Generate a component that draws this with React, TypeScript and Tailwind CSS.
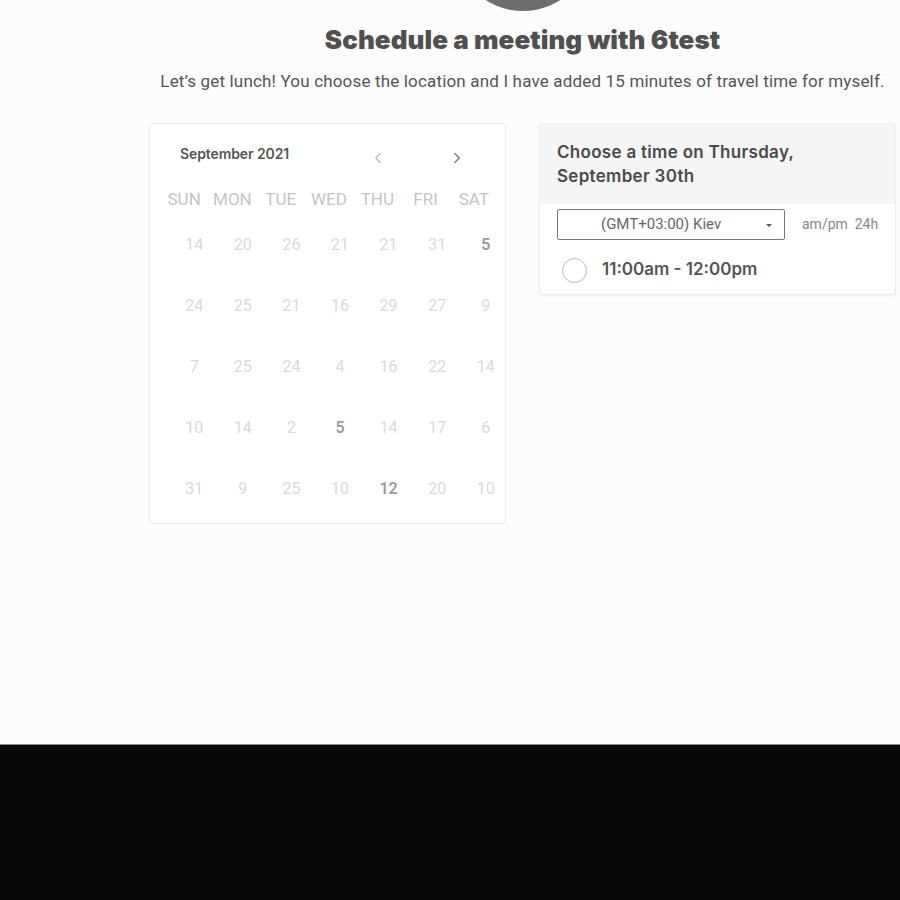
import { ChevronLeft, ChevronRight } from "lucide-react"

const weekdays = ["SUN", "MON", "TUE", "WED", "THU", "FRI", "SAT"]

const weeks: { n: number; strong?: boolean }[][] = [
    [{ n: 14 }, { n: 20 }, { n: 26 }, { n: 21 }, { n: 21 }, { n: 31 }, { n: 5, strong: true }],
    [{ n: 24 }, { n: 25 }, { n: 21 }, { n: 16 }, { n: 29 }, { n: 27 }, { n: 9 }],
    [{ n: 7 }, { n: 25 }, { n: 24 }, { n: 4 }, { n: 16 }, { n: 22 }, { n: 14 }],
    [{ n: 10 }, { n: 14 }, { n: 2 }, { n: 5, strong: true }, { n: 14 }, { n: 17 }, { n: 6 }],
    [{ n: 31 }, { n: 9 }, { n: 25 }, { n: 10 }, { n: 12, strong: true }, { n: 20 }, { n: 10 }],
]

function Calendar() {
    return (
        <div className="w-[357px] h-[401px] bg-white border border-[#ececec] rounded-[3px]">
            <div className="flex items-start h-[63px] pt-[20px] font-['Inter',sans-serif]">
                <div className="ml-[30px] text-[14px] leading-[20px] font-semibold text-[#555] tracking-[-0.1px]">September 2021</div>
                <ChevronLeft className="ml-[80px] mt-[5px] w-[18px] h-[18px] text-[#bbb]" strokeWidth={1.8}/>
                <ChevronRight className="ml-[61px] mt-[5px] w-[18px] h-[18px] text-[#777]" strokeWidth={1.8}/>
            </div>
            <div className="ml-[10px] w-[338px] grid grid-cols-7 text-center text-[17px] text-[#c4c4c4] font-['Roboto',sans-serif] leading-[24px]">
                {weekdays.map(d => <div key={d}>{d}</div>)}
            </div>
            <div className="ml-[20px] w-[340px] mt-[24px] font-['Roboto',sans-serif]">
                {weeks.map((w, i) => (
                    <div key={i} className="grid grid-cols-7 h-[61px] text-center text-[16px] leading-[20px]">
                        {w.map((d, j) => (
                            <div key={j} className={d.strong ? "text-[#9a9a9a] font-semibold" : "text-[#dadada]"}>{d.n}</div>
                        ))}
                    </div>
                ))}
            </div>
        </div>
    )
}

function TimePanel() {
    return (
        <div className="w-[357px] bg-white border border-[#ececec] rounded-[3px] shadow-[0_1px_2px_rgba(0,0,0,0.05)] font-['Inter',sans-serif]">
            <div className="bg-[#f5f5f5] h-[80px] pl-[17px] pt-[16px] text-[17px] leading-[24px] font-semibold text-[#4a4a4a] tracking-[0.3px]">
                <div>Choose a time on Thursday,</div>
                <div>September 30th</div>
            </div>
            <div className="flex items-center pl-[17px] pt-[5px]">
                <div className="relative w-[228px] h-[31px] border border-[#777] rounded-[2px] flex items-center">
                    <span className="ml-[43px] text-[15px] text-[#666] font-['Roboto',sans-serif]">(GMT+03:00) Kiev</span>
                    <span className="absolute right-[12px] top-[14px] w-0 h-0 border-l-[3px] border-r-[3px] border-t-[3px] border-l-transparent border-r-transparent border-t-[#555]"/>
                </div>
                <div className="ml-[17px] text-[14px] text-[#888] font-['Roboto',sans-serif]">am/pm&nbsp;&nbsp;24h</div>
            </div>
            <div className="flex items-center h-[54px] pt-[6px] pl-[22px]">
                <div className="w-[25px] h-[25px] rounded-full border border-[#bbb]"/>
                <div className="ml-[15px] text-[17px] font-semibold text-[#555]">11:00am - 12:00pm</div>
            </div>
        </div>
    )
}

export default function App() {
    return (
        <div className="w-[900px] h-[900px] flex flex-col bg-[#fcfcfc] overflow-hidden">
            <div className="h-[744px] pl-[145px] flex flex-col items-center">
                <div className="w-[138px] h-[138px] shrink-0 rounded-full bg-[#6e6e6e] mt-[-127px]"/>
                <h1 className="mt-[13px] text-[26px] leading-[32px] font-black text-[#505050] tracking-[0.05px] font-['Inter',sans-serif]">
                    Schedule a meeting with 6test
                </h1>
                <p className="mt-[14px] text-[17px] leading-[22px] text-[#555] tracking-[0.17px] whitespace-nowrap font-['Roboto',sans-serif]">
                    Let’s get lunch! You choose the location and I have added 15 minutes of travel time for myself.
                </p>
                <div className="mt-[31px] w-full px-[4px] flex justify-between items-start">
                    <Calendar/>
                    <TimePanel/>
                </div>
            </div>
            <div className="flex-1 bg-[#080808] border-t border-[#8a8a8a]"/>
        </div>
    )
}
